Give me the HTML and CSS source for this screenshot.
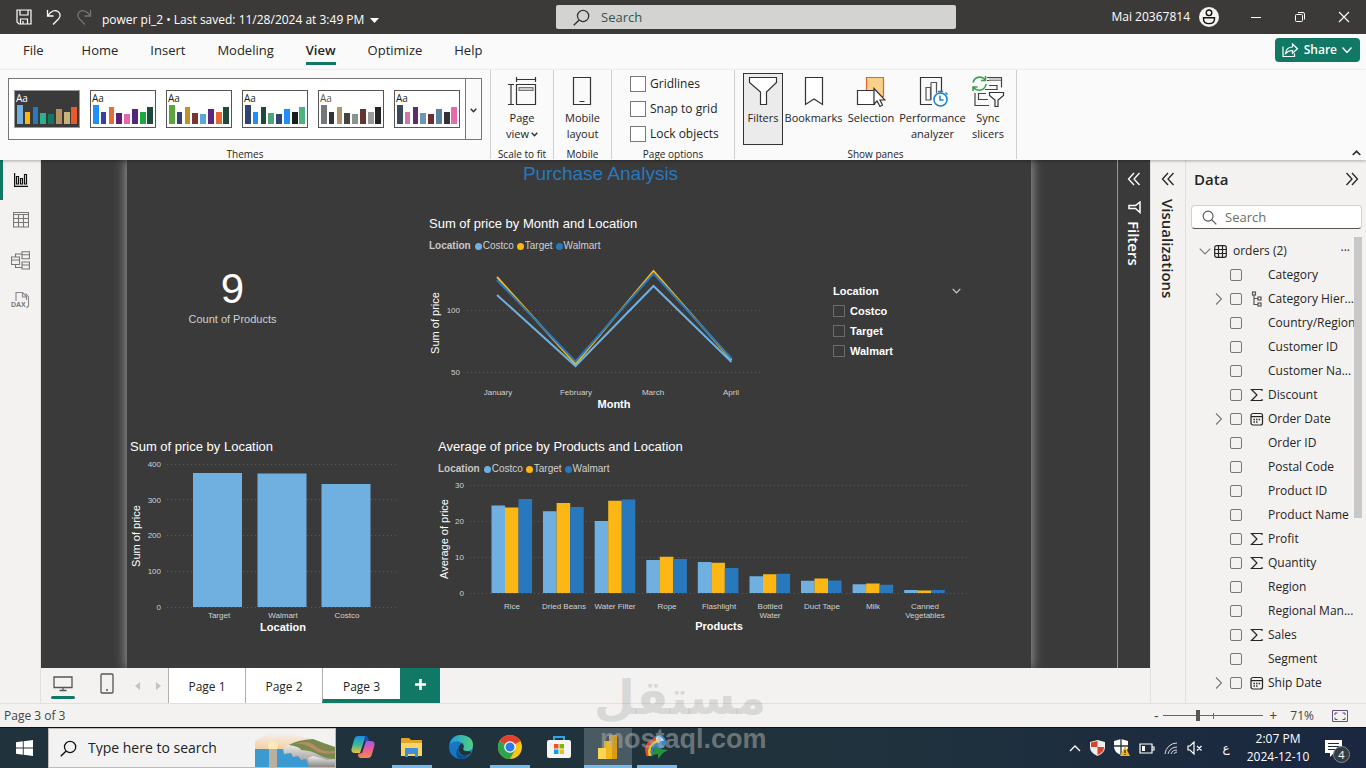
FILE: index.html
```html
<!DOCTYPE html>
<html lang="en">
<head>
<meta charset="utf-8">
<title>power pi_2</title>
<link rel="stylesheet" href="styles.css">
</head>
<body>
<svg class="defs" aria-hidden="true">
  <symbol id="i-sigma" viewBox="0 0 14 14"><path d="M12 3V1.500H1.500L7 7 1.500 12.500H12V11" fill="none" stroke="#252423" stroke-width="1.200"/></symbol>
  <symbol id="i-cal" viewBox="0 0 14 14"><rect x="1" y="1.500" width="11.500" height="11.500" rx="2" fill="none" stroke="#252423" stroke-width="1.200"/><path d="M1 4.600h11.500" stroke="#252423" stroke-width="1.200"/><path d="M3.500 7.500h7M3.500 10h5" stroke="#252423" stroke-width="1.400" stroke-dasharray="1.400 1.200"/></symbol>
  <symbol id="i-hier" viewBox="0 0 14 16"><g fill="none" stroke="#555" stroke-width="1.200"><rect x="2.500" y="1" width="3" height="3"/><rect x="8" y="6" width="3" height="3"/><rect x="8" y="12" width="3" height="3"/><path d="M4 4v9.500h4M4 7.500h4"/></g></symbol>
  <symbol id="i-right" viewBox="0 0 8 14"><path d="M1 1.500 6.500 7 1 12.500" fill="none" stroke="#777" stroke-width="1.100"/></symbol>
  <symbol id="i-dbl-left" viewBox="0 0 14 14"><path d="M7 1 1.500 7 7 13M12.500 1 7 7l5.500 6" fill="none" stroke="currentColor" stroke-width="1.300"/></symbol>
  <symbol id="i-search" viewBox="0 0 16 16"><circle cx="9.500" cy="6.500" r="5.300" fill="none" stroke="currentColor" stroke-width="1.200"/><path d="M5.800 10.300.7 15.400" stroke="currentColor" stroke-width="1.300"/></symbol>
</svg>

<header class="titlebar">
  <div class="title-left">
    <button class="icon-btn" aria-label="Save"><svg width="16" height="16" viewBox="0 0 16 16" fill="none" stroke="#fff" stroke-width="1.200"><path d="M1 1h14v14H3L1 13z"/><path d="M4 1v5h8V1M4.500 15v-5h7v5M7 12v3"/></svg></button>
    <button class="icon-btn" aria-label="Undo"><svg width="16" height="16" viewBox="0 0 16 16" fill="none" stroke="#fff" stroke-width="1.300"><path d="M1.500 1v6h6M1.800 6.700C5 2 9 .5 12 2.500c3 2.200 2.500 5.500.5 7.500L7 15.500"/></svg></button>
    <button class="icon-btn dim" aria-label="Redo"><svg width="16" height="16" viewBox="0 0 16 16" fill="none" stroke="#77756f" stroke-width="1.300"><path d="M14.500 1v6h-6M14.200 6.700C11 2 7 .5 4 2.500 1 4.700 1.500 8 3.500 10L9 15.500"/></svg></button>
    <button class="doc-title">power pi_2 • Last saved: 11/28/2024 at 3:49 PM<svg width="9" height="5" viewBox="0 0 9 5"><path d="M0 0h9L4.500 5z" fill="#fff"/></svg></button>
  </div>
  <label class="title-search"><svg width="17" height="17"><use href="#i-search"/></svg><input type="text" placeholder="Search" aria-label="Search"></label>
  <div class="title-right">
    <span>Mai 20367814</span>
    <svg class="avatar" width="20" height="20" viewBox="0 0 20 20"><circle cx="10" cy="10" r="10" fill="#f3f2f1"/><circle cx="10" cy="5.800" r="2.800" fill="none" stroke="#111" stroke-width="1.400"/><path d="M4.500 10.700h11v1.300c0 3-2.500 4.600-5.500 4.600S4.500 15 4.500 12z" fill="none" stroke="#111" stroke-width="1.400"/></svg>
    <button class="win-btn" aria-label="Minimize"><svg width="12" height="12"><path d="M1 6.500h10" stroke="#fff"/></svg></button>
    <button class="win-btn" aria-label="Restore"><svg width="12" height="12" fill="none" stroke="#fff"><rect x="1.500" y="3.500" width="7" height="7" rx="1"/><path d="M4 1.500h5a1.500 1.500 0 0 1 1.500 1.500v5.500"/></svg></button>
    <button class="win-btn" aria-label="Close"><svg width="12" height="12"><path d="m1 1 10 10M11 1 1 11" stroke="#fff" stroke-width="1.100"/></svg></button>
  </div>
</header>

<nav class="tabs">
  <button>File</button><button>Home</button><button>Insert</button><button>Modeling</button><button class="on">View</button><button>Optimize</button><button>Help</button>
  <button class="share"><svg width="17" height="15" viewBox="0 0 17 15" fill="none" stroke="#fff" stroke-width="1.200"><path d="M1 3.500v10h11.500v-3"/><path d="M3.500 10.500C4 6.500 6.500 4 10.500 4V1L15.500 5.700l-5 4.500V7.500c-3 0-5 .8-7 3z"/></svg>Share<svg width="10" height="6" viewBox="0 0 10 6"><path d="m.5.5 4.500 5 4.500-5" fill="none" stroke="#fff" stroke-width="1.300"/></svg></button>
</nav>

<section class="ribbon">
  <div class="group themes">
    <div class="gallery">
      <div class="thumbs">
        <button class="thumb dark" aria-label="Theme 1"><span>Aa</span><svg width="62" height="19"><path fill="#70b0e0" d="M1 0h6v19H1z"/><path fill="#fcb714" d="M9 7h5v12H9z"/><path fill="#2878bd" d="M17 2h5v17h-5z"/><path fill="#2fb08c" d="M24 8h6v11h-6z"/><path fill="#117865" d="M32 9h6v10h-6z"/><path fill="#b59262" d="M40 4h6v15h-6z"/><path fill="#c7b27c" d="M48 7h6v12h-6z"/><path fill="#ec5a29" d="M55 2h6v17h-6z"/></svg></button>
        <button class="thumb" aria-label="Theme 2"><span>Aa</span><svg width="62" height="19"><path fill="#1e8fff" d="M1 0h6v19H1z"/><path fill="#3a3fa6" d="M9 7h5v12H9z"/><path fill="#e66c37" d="M17 2h5v17h-5z"/><path fill="#5f1b78" d="M24 8h6v11h-6z"/><path fill="#e567ae" d="M32 9h6v10h-6z"/><path fill="#52257f" d="M40 4h6v15h-6z"/><path fill="#1aab40" d="M48 7h6v12h-6z"/><path fill="#1c4b3b" d="M55 2h6v17h-6z"/></svg></button>
        <button class="thumb" aria-label="Theme 3"><span>Aa</span><svg width="62" height="19"><path fill="#5aa63c" d="M1 0h6v19H1z"/><path fill="#33436f" d="M9 7h5v12H9z"/><path fill="#c0902d" d="M17 2h5v17h-5z"/><path fill="#7c3535" d="M24 8h6v11h-6z"/><path fill="#5ba6db" d="M32 9h6v10h-6z"/><path fill="#5f257e" d="M40 4h6v15h-6z"/><path fill="#ec6430" d="M48 7h6v12h-6z"/><path fill="#1c4b3b" d="M55 2h6v17h-6z"/></svg></button>
        <button class="thumb" aria-label="Theme 4"><span>Aa</span><svg width="62" height="19"><path fill="#31446f" d="M1 0h6v19H1z"/><path fill="#1e8fff" d="M9 7h5v12H9z"/><path fill="#20483f" d="M17 2h5v17h-5z"/><path fill="#4aa878" d="M24 8h6v11h-6z"/><path fill="#31446f" d="M32 9h6v10h-6z"/><path fill="#1e8fff" d="M40 4h6v15h-6z"/><path fill="#151f20" d="M48 7h6v12h-6z"/><path fill="#4db380" d="M55 2h6v17h-6z"/></svg></button>
        <button class="thumb grey" aria-label="Theme 5"><span>Aa</span><svg width="62" height="19"><path fill="#74787a" d="M1 0h6v19H1z"/><path fill="#333" d="M9 7h5v12H9z"/><path fill="#b39367" d="M17 2h5v17h-5z"/><path fill="#444" d="M24 8h6v11h-6z"/><path fill="#8a9491" d="M32 9h6v10h-6z"/><path fill="#633" d="M40 4h6v15h-6z"/><path fill="#999" d="M48 7h6v12h-6z"/><path fill="#222" d="M55 2h6v17h-6z"/></svg></button>
        <button class="thumb" aria-label="Theme 6"><span>Aa</span><svg width="62" height="19"><path fill="#3b4a5a" d="M1 0h6v19H1z"/><path fill="#d277a9" d="M9 7h5v12H9z"/><path fill="#5a2d73" d="M17 2h5v17h-5z"/><path fill="#6c97bb" d="M24 8h6v11h-6z"/><path fill="#6f2b32" d="M32 9h6v10h-6z"/><path fill="#5a82a1" d="M40 4h6v15h-6z"/><path fill="#33303b" d="M48 7h6v12h-6z"/><path fill="#e56bad" d="M55 2h6v17h-6z"/></svg></button>
      </div>
      <button class="gallery-more" aria-label="More themes"><svg width="7" height="5"><path d="m.7.8 2.800 2.900L6.300.8" fill="none" stroke="#333" stroke-width="1.500"/></svg></button>
    </div>
    <p class="group-name">Themes</p>
  </div>

  <div class="group scale">
    <button class="tool"><svg width="30" height="32" viewBox="0 0 30 32" fill="none" stroke="#333" stroke-width="1.200"><path d="M9.500 1v5M28.500 1v5M9.500 3.500h19M1 8.500h6M1 28.500h6M4 8.500v20"/><path d="M9.500 8.500h19v20h-19z"/><path d="M12 11.500h14v3H12z" fill="#ccc" stroke="#777"/></svg>Page<br>view<svg class="mini" width="7" height="5"><path d="m.7.8 2.800 2.900L6.300.8" fill="none" stroke="#333" stroke-width="1.500"/></svg></button>
    <p class="group-name">Scale to fit</p>
  </div>

  <div class="group mobile">
    <button class="tool"><svg width="20" height="32" viewBox="0 0 20 32" fill="none" stroke="#333" stroke-width="1.200"><path d="M1.500 1.500h17v27h-17zM7.500 25.500h5"/></svg>Mobile<br>layout</button>
    <p class="group-name">Mobile</p>
  </div>

  <div class="group options">
    <div class="checks">
      <label><input type="checkbox">Gridlines</label>
      <label><input type="checkbox">Snap to grid</label>
      <label><input type="checkbox">Lock objects</label>
    </div>
    <p class="group-name">Page options</p>
  </div>

  <div class="group panes">
    <div class="tools">
      <button class="tool pressed"><svg width="30" height="32" viewBox="0 0 30 32"><path d="M1.500 1.500h27v5l-10 9.500v12.500h-6V16L1.500 6.500z" fill="#fff" stroke="#333" stroke-width="1.200"/></svg>Filters</button>
      <button class="tool bookmarks"><svg width="20" height="32" viewBox="0 0 20 32"><path d="M1.500 1.500h17v27L10 23l-8.500 5.500z" fill="#fff" stroke="#333" stroke-width="1.200"/></svg>Bookmarks</button>
      <button class="tool selection"><svg width="30" height="32" viewBox="0 0 30 32"><path d="M10.500 1.500h17v19h-17z" fill="#f7d08a" stroke="#e8632c" stroke-width="1.200"/><path d="M1.500 14.500h17v14h-17z" fill="#fff" stroke="#333" stroke-width="1.200"/><path d="m18 12.500 11 11.500h-5l2.500 5-2.500 1.500-3-5.500-3 3z" fill="#fff" stroke="#333" stroke-width="1.200"/></svg>Selection</button>
      <button class="tool perf"><svg width="30" height="32" viewBox="0 0 30 32" fill="none"><path d="M14 28.500H2.500v-27h21V16" stroke="#333" stroke-width="1.200"/><path d="M8 11.500h4.500V24H8zM13 6.500h5.500V17M13 6.500V24" stroke="#555" stroke-width="1.200"/><circle cx="22.500" cy="23.500" r="6.500" fill="#fff" stroke="#1683d0" stroke-width="1.500"/><path d="M22 19.500V24h3.500M20 15.500h5M22.500 15v2M27.500 16.500l2 2" stroke="#1683d0" stroke-width="1.500"/></svg>Performance<br>analyzer</button>
      <button class="tool sync"><svg width="34" height="32" viewBox="0 0 34 32" fill="none"><path d="M16 1.500h14.500v10M16 4.500h14M18 9.500h8v4H14M4 17v12.500h14M15 17.500H7.500v6H17" stroke="#444" stroke-width="1.200"/><path d="M18 2h12v2.500H18z" fill="#ccc"/><path d="M2 6.500A7 7 0 0 1 14 3.500M15 8a7 7 0 0 1-12.500 3.500M14.500 0v4.500H10M2 15v-4h4.500" stroke="#3ca04a" stroke-width="1.600"/><path d="M18.500 16.500h14v3L27 24v6.500h-3V24l-5.500-4.500z" fill="#fff" stroke="#333" stroke-width="1.200"/></svg>Sync<br>slicers</button>
    </div>
    <p class="group-name">Show panes</p>
  </div>
  <button class="collapse" aria-label="Collapse ribbon"><svg width="9" height="6"><path d="m.7 5 3.800-3.700L8.300 5" fill="none" stroke="#333" stroke-width="1.700"/></svg></button>
</section>

<main class="work">
  <nav class="rail">
    <button class="on" aria-label="Report view"><svg width="14" height="14" viewBox="0 0 14 14" fill="none" stroke="#111" stroke-width="1.200"><path d="M.6 0v13.400H14M2.500 3.500h2v7.500h-2zM6.500 5.500h2V11h-2zM10.500 1.500h2V11h-2z"/></svg></button>
    <button aria-label="Table view"><svg width="16" height="16" viewBox="0 0 16 16" fill="none" stroke="#777" stroke-width="1.100"><path d="M.5.5h15v14.500H.5zM.5 2.500h15M.5 6.500h15M.5 10.500h15M5.500 2.500V15M10.500 2.500V15"/></svg></button>
    <button aria-label="Model view"><svg width="19" height="19" viewBox="0 0 19 19" fill="none" stroke="#777" stroke-width="1.100"><path d="M.5 6h8v7.500h-8zM.5 9h8M11 .8h7.400v7H11zM11 3.800h7.400M11 11h7.400v7H11zM11 14h7.400M4.500 6V3H11M4.500 13.500v3H11"/></svg></button>
    <button aria-label="DAX query view"><svg width="20" height="18" viewBox="0 0 20 18" fill="none" stroke="#888" stroke-width="1.100"><path d="M5 10V1.500h6.500l4 4V9M11.500 1.500V6H16M14.500 2.500l3 3.500v9l-2 2"/><text x="0" y="16" class="dax">DAX</text></svg></button>
  </nav>

  <div class="center">
    <div class="stage">
      <div class="canvas">
        <article class="page">
          <h1>Purchase Analysis</h1>
          <div class="row top">
            <div class="card"><strong>9</strong><span>Count of Products</span></div>
            <figure class="visual">
              <h2>Sum of price by Month and Location</h2>
              <p class="legend"><b>Location</b><i class="costco"></i>Costco<i class="target"></i>Target<i class="walmart"></i>Walmart</p>
              <svg width="340" height="158" viewBox="429 255 340 158">
                <path class="grid" d="M467 310.500h294M467 372.500h294"/>
                <g class="tick end"><text x="460" y="313">100</text><text x="460" y="375">50</text></g>
                <path class="line s-target" d="M497 277 575.500 364 653.500 271 731.500 360"/>
                <path class="line s-walmart" d="M497 280 575.500 361.500 653.500 273.500 731.500 358.500"/>
                <path class="line s-costco" d="M497 295 575.500 366 653.500 286 731.500 362"/>
                <g class="tick"><text x="498" y="395">January</text><text x="576" y="395">February</text><text x="653" y="395">March</text><text x="731" y="395">April</text></g>
                <text class="axis" x="614" y="408">Month</text>
                <text class="axis thin" transform="translate(439 323) rotate(-90)">Sum of price</text>
              </svg>
            </figure>
            <fieldset class="slicer">
              <legend>Location<svg width="9" height="6"><path d="m.7.800 3.800 4L8.300.8" fill="none" stroke="#ccc" stroke-width="1.200"/></svg></legend>
              <label><input type="checkbox">Costco</label>
              <label><input type="checkbox">Target</label>
              <label><input type="checkbox">Walmart</label>
            </fieldset>
          </div>
          <div class="row bottom">
            <figure class="visual">
              <h2>Sum of price by Location</h2>
              <svg width="272" height="178" viewBox="130 457 272 178">
                <path class="grid" d="M167 464.500h232M167 499.500h232M167 535.500h232M167 571.500h232M167 607.500h232"/>
                <g class="tick end"><text x="161" y="467">400</text><text x="161" y="503">300</text><text x="161" y="538">200</text><text x="161" y="574">100</text><text x="161" y="610">0</text></g>
                <path class="s-costco" d="M193 473h49v134h-49zM257.500 473.500h49V607h-49zM321.500 484h49v123h-49z"/>
                <g class="tick"><text x="219" y="618">Target</text><text x="283" y="618">Walmart</text><text x="347" y="618">Costco</text></g>
                <text class="axis" x="283" y="631">Location</text>
                <text class="axis thin" transform="translate(140 536) rotate(-90)">Sum of price</text>
              </svg>
            </figure>
            <figure class="visual">
              <h2>Average of price by Products and Location</h2>
              <p class="legend"><b>Location</b><i class="costco"></i>Costco<i class="target"></i>Target<i class="walmart"></i>Walmart</p>
              <svg width="532" height="157" viewBox="438 478 532 157">
                <path class="grid" d="M470 485.500h497M470 521.500h497M470 557.500h497M470 593.500h497"/>
                <g class="tick end"><text x="464" y="488">30</text><text x="464" y="524">20</text><text x="464" y="560">10</text><text x="464" y="596">0</text></g>
                <path class="s-costco" d="M491.500 593v-87.500h13.600V593zM543 593v-81.700h13.600V593zM594.700 593v-72h13.600v72zM646.300 593v-33h13.600v33zM697.800 593v-31h13.600v31zM749.500 593v-16.700h13.600V593zM801 593v-12.200h13.600V593zM852.600 593v-8.800h13.600v8.800zM904.200 593v-3h13.600v3z"/>
                <path class="s-target" d="M505 593v-85.500h13.600V593zM556.600 593v-90h13.600v90zM608.200 593v-92.300h13.600V593zM659.800 593v-36.300h13.600V593zM711.300 593v-30.300h13.600V593zM763 593v-18.700h13.600V593zM814.500 593v-14.600h13.600V593zM866.100 593v-9.400h13.600v9.400zM917.700 593v-2.500h13.600v2.500z"/>
                <path class="s-walmart" d="M518.500 593v-94h13.600v94zM570.100 593v-86h13.600v86zM621.700 593v-93.500h13.600V593zM673.300 593v-34h13.600v34zM724.800 593v-25h13.600v25zM776.500 593v-19.300h13.600V593zM828 593v-12.500h13.600V593zM879.600 593v-8.300h13.600v8.300zM931.200 593v-3h13.600v3z"/>
                <g class="tick"><text x="512" y="609">Rice</text><text x="564" y="609">Dried Beans</text><text x="615" y="609">Water Filter</text><text x="667" y="609">Rope</text><text x="719" y="609">Flashlight</text><text x="770" y="609">Bottled</text><text x="770" y="618">Water</text><text x="822" y="609">Duct Tape</text><text x="873" y="609">Milk</text><text x="925" y="609">Canned</text><text x="925" y="618">Vegetables</text></g>
                <text class="axis" x="719" y="630">Products</text>
                <text class="axis thin" transform="translate(448 539) rotate(-90)">Average of price</text>
              </svg>
            </figure>
          </div>
        </article>
      </div>
      <aside class="side filters">
        <button aria-label="Expand filters"><svg width="14" height="14"><use href="#i-dbl-left"/></svg></button>
        <svg class="funnel" width="13" height="13" viewBox="0 0 13 13"><path d="M12 1v10.500L7.500 7.500H1v-3h6.500z" fill="none" stroke="#fff" stroke-width="1.500"/></svg>
        <h2>Filters</h2>
      </aside>
    </div>
    <footer class="pagebar">
      <button class="view-btn on" aria-label="Desktop layout"><svg width="20" height="16" viewBox="0 0 20 16" fill="none" stroke="#555" stroke-width="1.300"><path d="M1 1h18v10.500H1zM10 11.500v3M6.500 14.500h7"/></svg></button>
      <button class="view-btn" aria-label="Mobile layout"><svg width="14" height="21" viewBox="0 0 14 21" fill="none" stroke="#555" stroke-width="1.300"><rect x="1" y="1" width="12" height="19" rx="1"/><path d="M6 17h2"/></svg></button>
      <button class="arrow" aria-label="Previous page"><svg width="5" height="8"><path d="M5 0v8L0 4z" fill="#c4c3c1"/></svg></button>
      <button class="arrow" aria-label="Next page"><svg width="5" height="8"><path d="M0 0v8l5-4z" fill="#c4c3c1"/></svg></button>
      <button class="pg">Page 1</button><button class="pg">Page 2</button><button class="pg on">Page 3</button>
      <button class="add" aria-label="New page"><svg width="11" height="11"><path d="M5.500 0v11M0 5.500h11" stroke="#fff" stroke-width="2.600"/></svg></button>
    </footer>
  </div>

  <aside class="side viz">
    <button aria-label="Expand visualizations"><svg width="14" height="14"><use href="#i-dbl-left"/></svg></button>
    <h2>Visualizations</h2>
  </aside>

  <aside class="data">
    <header><h2>Data</h2><button aria-label="Collapse data"><svg class="flip" width="14" height="14"><use href="#i-dbl-left"/></svg></button></header>
    <label class="data-search"><svg class="flip" width="15" height="15"><use href="#i-search"/></svg><input type="text" placeholder="Search" aria-label="Search fields"></label>
    <div class="fields">
      <ul>
        <li class="table"><svg width="12" height="7"><path d="m.7.7 5.300 5.300L11.300.7" fill="none" stroke="#777" stroke-width="1.100"/></svg><svg width="13" height="13" viewBox="0 0 13 13" fill="none" stroke="#252423" stroke-width="1.200"><rect x=".7" y=".7" width="11.600" height="11.600" rx="2"/><path d="M4.500.7v11.600M8.500.7v11.600M.7 4.500h11.600M.7 8.500h11.600"/></svg><span>orders (2)</span><button aria-label="More options">···</button></li>
        <li><i></i><label><input type="checkbox"><i></i>Category</label></li>
        <li><i><svg width="8" height="14"><use href="#i-right"/></svg></i><label><input type="checkbox"><i><svg width="14" height="16"><use href="#i-hier"/></svg></i>Category Hier...</label></li>
        <li><i></i><label><input type="checkbox"><i></i>Country/Region</label></li>
        <li><i></i><label><input type="checkbox"><i></i>Customer ID</label></li>
        <li><i></i><label><input type="checkbox"><i></i>Customer Na...</label></li>
        <li><i></i><label><input type="checkbox"><i><svg width="14" height="14"><use href="#i-sigma"/></svg></i>Discount</label></li>
        <li><i><svg width="8" height="14"><use href="#i-right"/></svg></i><label><input type="checkbox"><i><svg width="14" height="14"><use href="#i-cal"/></svg></i>Order Date</label></li>
        <li><i></i><label><input type="checkbox"><i></i>Order ID</label></li>
        <li><i></i><label><input type="checkbox"><i></i>Postal Code</label></li>
        <li><i></i><label><input type="checkbox"><i></i>Product ID</label></li>
        <li><i></i><label><input type="checkbox"><i></i>Product Name</label></li>
        <li><i></i><label><input type="checkbox"><i><svg width="14" height="14"><use href="#i-sigma"/></svg></i>Profit</label></li>
        <li><i></i><label><input type="checkbox"><i><svg width="14" height="14"><use href="#i-sigma"/></svg></i>Quantity</label></li>
        <li><i></i><label><input type="checkbox"><i></i>Region</label></li>
        <li><i></i><label><input type="checkbox"><i></i>Regional Man...</label></li>
        <li><i></i><label><input type="checkbox"><i><svg width="14" height="14"><use href="#i-sigma"/></svg></i>Sales</label></li>
        <li><i></i><label><input type="checkbox"><i></i>Segment</label></li>
        <li><i><svg width="8" height="14"><use href="#i-right"/></svg></i><label><input type="checkbox"><i><svg width="14" height="14"><use href="#i-cal"/></svg></i>Ship Date</label></li>
      </ul>
      <div class="scroll"></div>
    </div>
  </aside>
</main>

<footer class="status">
  <span class="count">Page 3 of 3</span>
  <button aria-label="Zoom out">-</button>
  <input type="range" min="0" max="100" value="34" aria-label="Zoom">
  <button aria-label="Zoom in">+</button>
  <span class="pct">71%</span>
  <button aria-label="Fit to page"><svg width="16" height="12" viewBox="0 0 16 12" fill="none" stroke="#555"><path d="M.5.500h15v11H.5z" stroke="#6b4f7d"/><path d="M3 5V3h2.500M10.500 3H13v2M13 7.500v2h-2.500M5.500 9.500H3v-2"/></svg></button>
</footer>

<footer class="taskbar">
  <button class="task" aria-label="Start"><svg width="17" height="16" viewBox="0 0 17 16" fill="#fff"><path d="M0 2.300 6.800 1.300v6.300H0zM7.700 1.200 17 0v7.600H7.700zM0 8.400h6.800v6.400L0 13.800zM7.700 8.400H17V16l-9.300-1.200z"/></svg></button>
  <label class="task-search"><svg width="17" height="17"><use href="#i-search"/></svg><input type="text" placeholder="Type here to search" aria-label="Type here to search">
    <svg width="80" height="38" viewBox="0 0 80 38"><defs><linearGradient id="sky" x2="0" y2="1"><stop stop-color="#f2f2f2"/><stop offset="1" stop-color="#f6c98f"/></linearGradient><linearGradient id="rock" x2="0" y2="1"><stop stop-color="#eee"/><stop offset="1" stop-color="#8a8580"/></linearGradient></defs><path d="M0 12Q20-2 44 7q20 4 36 12v4H0z" fill="url(#sky)"/><circle cx="18" cy="17" r="5" fill="#ffe9b8"/><path d="M0 20h60v18H0z" fill="#3a9ad1"/><path d="M14 20h8v18h-8z" fill="#f2b98c" opacity=".7"/><path d="M28 19q6-4 14-4 20-1 38 5v18H54l-3-8-5 1-3-4-5 1-2-4-7 1z" fill="url(#rock)"/><path d="M34 16q8-5 24-6 10 4 22 8v12q-8 0-14-3-10-6-20-6 0-3-12-5z" fill="#7a8a4c"/><path d="M40 15q12-5 20 2t20 5v2q-14 2-22-4t-18-5z" fill="#b88c66"/><path d="m54 38-1-9 5-2 8 2 6 2 8-1v8z" fill="url(#rock)"/></svg></label>
  <button class="task app" aria-label="Copilot"><svg width="26" height="26" viewBox="0 0 26 26"><defs><linearGradient id="cpa" x2="0" y2="1"><stop stop-color="#1a8fe0"/><stop offset=".5" stop-color="#37b7a0"/><stop offset="1" stop-color="#f2c230"/></linearGradient><linearGradient id="cpb" x2="0" y2="1"><stop stop-color="#a259e8"/><stop offset=".5" stop-color="#ec5c99"/><stop offset="1" stop-color="#f6894a"/></linearGradient></defs><path d="M8 2h7q3 0 3 4l-4 1-4 12H5q-5 0-3-6L4 6q1-4 4-4z" fill="url(#cpa)"/><path d="M18 24h-7q-3 0-3-4l4-1 4-12h5q5 0 3 6l-2 7q-1 4-4 4z" fill="url(#cpb)"/><path d="M15 2q3 0 4 5h-5z" fill="#2846b4"/></svg></button>
  <button class="task app open" aria-label="File Explorer"><svg width="22" height="22" viewBox="0 0 22 22"><path d="M0 3q0-1 1-1h7l2 2h11v16H0z" fill="#e0a526"/><path d="M0 7h21v13H0z" fill="#fbd563"/><path d="M4 21v-8q0-1 1-1h11q1 0 1 1v8h-3v-3H7v3z" fill="#3f8fd6"/></svg></button>
  <button class="task app" aria-label="Edge"><svg width="26" height="26" viewBox="0 0 26 26"><defs><linearGradient id="eda"><stop stop-color="#1b9de2"/><stop offset="1" stop-color="#54d07a"/></linearGradient></defs><circle cx="13" cy="13" r="12" fill="#1677c4"/><path d="M1.500 10Q4 1 13 1q12 1 12 10 0 6-6 6-4 0-4-2 2-3-1-6-6-4-12.500 1z" fill="url(#eda)"/><path d="M10 14q-1 9 10 8-4 4-9 3-5-4-1-11z" fill="#0d4f93"/><path d="M14 9q3 3 1 6 1 3 7 2l1 2q-4 4-9 2-5-3-3-9z" fill="#20333d"/></svg></button>
  <button class="task app open" aria-label="Chrome"><svg width="26" height="26" viewBox="0 0 26 26"><circle cx="13" cy="13" r="12" fill="#fbc417"/><path d="M13 13 2.600 7A12 12 0 0 1 23.400 7z" fill="#e2402c"/><path d="M13 13 2.600 7A12 12 0 0 0 13 25l5-9z" fill="#2da44e"/><circle cx="13" cy="13" r="5.800" fill="#fff"/><circle cx="13" cy="13" r="4.500" fill="#3079e8"/></svg></button>
  <button class="task app" aria-label="Microsoft Store"><svg width="24" height="24" viewBox="0 0 24 24"><path d="M7 6V2h10v4" fill="none" stroke="#28a8ea" stroke-width="2"/><rect y="5" width="24" height="18" rx="2" fill="#f5f5f5"/><path d="M7 9h4.500v4.500H7z" fill="#f25022"/><path d="M12.500 9H17v4.500h-4.500z" fill="#7fba00"/><path d="M7 14.500h4.500V19H7z" fill="#00a4ef"/><path d="M12.500 14.500H17V19h-4.500z" fill="#ffb900"/></svg></button>
  <button class="task app open active" aria-label="Power BI"><svg width="20" height="26" viewBox="0 0 20 26"><path d="M11 1h8v24h-8z" fill="#d99b10"/><path d="M6 7h8v18H6z" fill="#f0b722"/><path d="M0 14h8v11H0z" fill="#f9d553"/></svg></button>
  <button class="task app open" aria-label="Download manager"><svg width="26" height="26" viewBox="0 0 26 26"><circle cx="15" cy="8" r="7" fill="#3b88c9"/><path d="M13 2q5 0 7 5-4-1-5 2l-5-1z" fill="#cfe6f5"/><path d="M4 22Q-1 10 12 5" fill="none" stroke="#e5482d" stroke-width="3"/><path d="M6 22Q3 12 13 7" fill="none" stroke="#f2cc2d" stroke-width="2.500"/><path d="M8 22Q6 14 14 9" fill="none" stroke="#3a86d9" stroke-width="2"/><path d="m11 12 5 3 8 1-5 3-5 6v-5l-6 1z" fill="#27933c"/></svg></button>
  <div class="tray">
    <button aria-label="Hidden icons"><svg width="12" height="7"><path d="m1 6 5-5 5 5" fill="none" stroke="#fff" stroke-width="1.300"/></svg></button>
    <svg width="15" height="16" viewBox="0 0 15 16"><path d="M7.500 0 15 2v5q0 6-7.500 9Q0 13 0 7V2z" fill="#eee"/><path d="M7.500 1 1 2.500V7h6.500zM7.500 7v8Q14 12.500 14 7z" fill="#d8432b"/></svg>
    <svg width="16" height="18" viewBox="0 0 16 18"><path d="M7 0 14 2v6q0 5-7 8Q0 13 0 8V2z" fill="#fff"/><path d="M7 0v16M0 7h14" stroke="#20333d" stroke-width="1.300"/><path d="m11 7 5 10H6z" fill="#f7b417"/><path d="M11 11v3M11 15v1" stroke="#222" stroke-width="1.200"/></svg>
    <svg width="16" height="11"><path d="M1 1h12v9H1zM13.500 4h1.500v3h-1.500" fill="none" stroke="#fff" stroke-width="1.200"/><path d="M3 3h3v5H3z" fill="#fff"/></svg>
    <svg width="14" height="14" fill="none" stroke="#ddd"><path d="M1 13A12 12 0 0 1 13 2M4 13a9 9 0 0 1 9-7M7 13a6 6 0 0 1 6-4M10 13a3 3 0 0 1 3-2"/></svg>
    <svg width="16" height="14" fill="none" stroke="#fff" stroke-width="1.200"><path d="M1 5h2l4-4v12L3 9H1zM10 5l4.500 4.500M14.500 5 10 9.500"/></svg>
    <span class="lang" lang="ar">ع</span>
    <p class="clock">2:07 PM<br>2024-12-10</p>
    <button class="notes" aria-label="Notifications"><svg width="17" height="17"><path d="M0 0h17v13H9l-4 4v-4H0z" fill="#fff"/><path d="M3 3.500h11M3 6.500h11M3 9.500h8" stroke="#1c2a40"/></svg><span class="badge">4</span></button>
  </div>
</footer>

<div class="watermark"><span lang="ar" dir="rtl">مستقل</span><span>mostaql.com</span></div>
</body>
</html>
```
FILE: styles.css
```css
* { box-sizing: border-box; }
body {
  margin: 0;
  min-height: 100vh;
  display: flex;
  flex-direction: column;
  position: relative;
  overflow: hidden;
  background: #f3f2f1;
  color: #252423;
  font: 12px/16px "Open Sans", "Noto Sans", sans-serif;
}
button { border: 0; padding: 0; background: none; color: inherit; font: inherit; }
input { font: inherit; color: inherit; margin: 0; }
input[type="text"] { border: 0; outline: 0; padding: 0; background: none; min-width: 0; flex: 1; }
h1, h2, p, ul, figure, fieldset { margin: 0; padding: 0; border: 0; font-weight: 400; list-style: none; }
svg { flex: none; }
.defs { display: none; }
.flip { transform: scaleX(-1); }

/* title bar */
.titlebar { height: 34px; flex: none; background: #3b3a39; color: #fff; display: grid; grid-template-columns: 54fr 400px 41fr; align-items: center; padding: 0 0 0 16px; }
.title-left, .title-right { display: flex; align-items: center; }
.icon-btn { width: 16px; height: 16px; margin-right: 14px; }
.icon-btn.dim { margin-right: 10px; }
.icon-btn svg { display: block; }
.doc-title { display: flex; align-items: center; gap: 6px; padding-top: 6px; white-space: nowrap; font-size: 12px; }
.title-search { height: 24px; display: flex; align-items: center; gap: 11px; padding-left: 17px; background: #d3d3d1; border-radius: 2px; color: #333; font-size: 13px; }
.title-search input::placeholder { color: #33564c; opacity: 1; }
.title-right { justify-content: flex-end; padding-right: 16px; }
.avatar { margin: 0 41px 0 9px; }
.win-btn { width: 12px; height: 12px; margin-left: 32px; }
.avatar + .win-btn { margin-left: -10px; }
.win-btn svg { display: block; }

/* ribbon tabs */
.tabs { height: 36px; flex: none; background: #fafafa; display: flex; align-items: center; padding: 0 6px 4px 7px; font-size: 13px; }
.tabs button { height: 32px; padding: 0 16px; position: relative; }
.tabs button:first-child { margin-right: 6px; }
.tabs .on { font-weight: 600; }
.tabs .on::after { content: ""; position: absolute; left: 16px; right: 16px; bottom: 1px; height: 3px; background: #117865; }
.tabs .share { margin-left: auto; height: 24px; padding: 0 8px 0 7px; display: flex; align-items: center; gap: 5px; background: #117865; color: #fff; border-radius: 4px; font-size: 12px; font-weight: 600; }

/* ribbon */
.ribbon { height: 90px; flex: none; background: #fafafa; display: flex; position: relative; z-index: 1; box-shadow: 0 1px 3px rgba(0, 0, 0, .3); }
.group { height: 89px; border-right: 1px solid #d2d0ce; display: flex; flex-direction: column; align-items: center; justify-content: space-between; }
.group-name { font-size: 10px; line-height: 10px; white-space: nowrap; }
.themes { padding: 8px 8px 0; }
.gallery { display: flex; height: 62px; background: #fff; border: 1px solid #777; }
.thumbs { display: flex; align-items: center; gap: 10px; padding: 0 5px; }
.thumb { width: 66px; height: 38px; border: 1px solid #555; background: #fff; display: flex; flex-direction: column; justify-content: space-between; align-items: flex-start; padding: 2px 1px 3px; font-size: 10px; line-height: 11px; color: #222; }
.thumb.dark { background: #3a3a3a; color: #fff; border-color: #999; }
.thumb.grey { color: #555; }
.gallery-more { width: 16px; border-left: 1px solid #777; background: #fafafa; }
.scale { width: 63px; }
.mobile { width: 58px; }
.options { width: 123px; }
.tool { display: block; padding-top: 6px; text-align: center; white-space: nowrap; font-size: 11px; line-height: 16px; }
.tool > svg:first-child { display: block; margin: 0 auto 2px; height: 32px; }
.mini { margin-left: 2px; vertical-align: 1px; }
.checks { display: flex; flex-direction: column; gap: 9px; padding-top: 6px; width: 100%; padding-left: 18px; }
.checks label { display: flex; gap: 4px; align-items: center; height: 16px; white-space: nowrap; }
.checks input { appearance: none; width: 16px; height: 16px; border: 1px solid #777; background: #fff; }
.panes { width: 282px; }
.tools { display: flex; align-items: flex-start; align-self: stretch; padding: 3px 0 0 8px; }
.tools .tool { padding-top: 3px; }
.tools .pressed { width: 40px; border: 1px solid #333; background: #ebebeb; padding: 2px 0 18px; }
.bookmarks { width: 61px; }
.selection { width: 54px; }
.perf { width: 69px; }
.sync { width: 42px; }
.collapse { margin: auto 5px 4px auto; line-height: 8px; }

/* work area */
.work { flex: 1; display: flex; min-height: 0; }
.rail { width: 41px; border-right: 1px solid #e1dfdd; }
.rail button { display: flex; align-items: center; justify-content: center; width: 40px; height: 40px; padding-right: 2px; border-left: 3px solid transparent; }
.rail .on { border-color: #117865; }
.dax { font: bold 7px "Liberation Sans", sans-serif; fill: #777; stroke: none; }
.center { flex: 1; min-width: 0; display: flex; flex-direction: column; }
.stage { flex: 1; display: flex; min-height: 0; background: #3a3a3a; }
.canvas { flex: 1; min-width: 0; overflow: hidden; display: flex; justify-content: center; }
.page { width: 904px; background: #3a3a3a; box-shadow: 0 0 11px 1px #a0a0a0; color: #fff; font-family: "Liberation Sans", Arial, sans-serif; }
.page h1 { color: #2878bd; font-size: 19px; line-height: 27px; text-align: center; padding-left: 43px; }
.row { display: grid; align-items: start; }
.top { grid-template-columns: 302px 404px 1fr; padding-top: 27px; }
.bottom { grid-template-columns: 308px 1fr; padding: 24px 0 0 3px; }
.visual h2 { font-size: 13px; line-height: 20px; }
.visual svg { display: block; overflow: visible; }
.legend { display: flex; align-items: center; height: 16px; margin: 4px 0 1px; font-size: 10px; color: #d0d0d0; }
.legend b { color: #c8c8c8; margin-right: 1px; }
.legend i { width: 7px; height: 7px; border-radius: 50%; margin: 0 1px 0 3px; }
.legend .costco { background: #70b0e0; }
.legend .target { background: #fcb714; }
.legend .walmart { background: #2878bd; }
.s-costco { fill: #70b0e0; }
.s-target { fill: #fcb714; }
.s-walmart { fill: #2878bd; }
.line { fill: none; stroke-width: 2; }
.line.s-costco { stroke: #70b0e0; }
.line.s-target { stroke: #fcb714; }
.line.s-walmart { stroke: #2878bd; }
.grid { stroke: #5c5c5c; stroke-dasharray: 1 3; fill: none; }
.tick { font-size: 8px; fill: #d0d0d0; text-anchor: middle; }
.tick.end { text-anchor: end; }
.axis { font-size: 11px; font-weight: 700; fill: #fff; text-anchor: middle; }
.axis.thin { font-weight: 400; }
.card { width: 211px; padding-top: 53px; text-align: center; }
.card strong { display: block; font-weight: 400; font-size: 42px; line-height: 44px; }
.card span { font-size: 11px; line-height: 14px; color: #d0d0d0; }
.slicer { width: 128px; padding-top: 67px; font-size: 11px; font-weight: 700; }
.slicer legend { display: flex; float: left; width: 100%; justify-content: space-between; align-items: center; padding: 0; height: 20px; }
.slicer label { clear: both; display: flex; align-items: center; gap: 5px; height: 20px; }
.slicer input { appearance: none; width: 12px; height: 12px; border: 1px solid #6b6b6b; }

/* collapsed side panes */
.side { display: flex; flex-direction: column; align-items: center; padding-top: 12px; }
.side button { height: 14px; }
.side button svg, .data header svg { display: block; }
.side h2 { writing-mode: vertical-rl; font-weight: 600; font-size: 15px; line-height: 16px; }
.filters { width: 33px; border-left: 1px solid #999; color: #fff; }
.funnel { margin: 15px 0 7px; }
.viz { width: 36px; border-left: 1px solid #e1dfdd; border-right: 1px solid #e1dfdd; }
.viz h2 { margin-top: 13px; }

/* page tabs */
.pagebar { height: 35px; flex: none; display: flex; align-items: stretch; padding-left: 10px; }
.view-btn { width: 24px; margin-right: 20px; display: flex; justify-content: center; align-items: center; padding-bottom: 4px; position: relative; }
.view-btn + .view-btn { margin-right: 16px; }
.view-btn.on::after { content: ""; position: absolute; left: 0; right: 0; bottom: 4px; height: 3px; background: #117865; border-radius: 2px; }
.arrow { width: 5px; margin-right: 16px; }
.arrow + .arrow { margin-right: 7px; }
.pg { width: 77px; background: #fff; border-left: 1px solid #b3b0ad; padding-top: 3px; }
.pg.on { border-bottom: 4px solid #117865; width: 78px; padding-top: 7px; }
.add { width: 40px; background: #117865; }

/* data pane */
.data { width: 180px; display: flex; flex-direction: column; padding-left: 5px; min-height: 0; }
.data header { height: 40px; display: flex; justify-content: space-between; align-items: center; padding: 0 7px 2px 3px; }
.data h2 { font-size: 15px; font-weight: 600; }
.data-search { display: flex; align-items: center; gap: 8px; height: 24px; margin: 5px 4px 8px 0; padding-left: 10px; background: #fff; border: 1px solid #d1d1d1; border-bottom-color: #555; border-radius: 4px; color: #555; font-size: 13px; }
.data-search input::placeholder { color: #6b6f60; opacity: 1; }
.fields { flex: 1; display: flex; justify-content: space-between; min-height: 0; overflow: hidden; }
.fields ul { flex: 1; min-width: 0; padding-top: 2px; }
.fields li { display: flex; align-items: center; height: 24px; padding-left: 24px; white-space: nowrap; }
.fields li.table { padding: 0 4px 0 8px; }
.table svg + svg { margin: 0 6px 0 3px; }
.table button { margin-left: auto; }
.fields label { display: flex; align-items: center; }
.fields li i { width: 15px; flex: none; display: flex; }
.fields label i { width: 18px; margin-left: 8px; }
.fields input { appearance: none; flex: none; width: 12px; height: 12px; border: 1px solid #777; border-radius: 2px; }
.scroll { width: 8px; height: 281px; background: #c8c8c8; margin-right: 4px; flex: none; }

/* status bar */
.status { height: 25px; flex: none; border-top: 1px solid #e1dfdd; border-bottom: 1px solid #111; display: flex; align-items: center; padding: 0 18px 0 4px; color: #444; }
.count { margin-right: auto; }
.status button { width: 8px; font-size: 14px; }
.status input { appearance: none; width: 100px; height: 12px; margin: 0 6px 0 3px; background: linear-gradient(#666, #666) 50px 50% / 1px 6px no-repeat, linear-gradient(#666, #666) 0 50% / 100% 1px no-repeat; }
.status input::-webkit-slider-thumb { appearance: none; width: 4px; height: 11px; background: #555; }
.pct { margin: 0 18px 0 13px; }
.status button:last-child { width: 16px; }
.status button svg { display: block; }

/* taskbar */
.taskbar { height: 40px; flex: none; display: flex; align-items: stretch; background: linear-gradient(90deg, #20333d, #20333d 60%, #1a2740); color: #fff; }
.task { width: 48px; display: flex; align-items: center; justify-content: center; }
.task-search { width: 288px; display: flex; align-items: center; gap: 11px; padding-left: 11px; background: #f2f2f2; border: 1px solid #bbb; color: #111; font-size: 14px; overflow: hidden; }
.task-search input::placeholder { color: #222; opacity: 1; }
.app { width: 40px; margin-right: 9px; border-bottom: 3px solid transparent; }
.task-search + .app { margin-left: 7px; }
.app.open { border-bottom-color: #76b9ed; }
.app.active { width: 48px; margin: 0 5px 0 -4px; background: #4a5a63; }
.tray { margin-left: auto; display: flex; align-items: center; gap: 9px; padding-right: 16px; }
.tray button { display: flex; }
.lang { width: 16px; margin-left: 6px; text-align: center; font-family: "DejaVu Sans", sans-serif; }
.clock { width: 66px; margin: 0 5px 0 2px; text-align: center; line-height: 18px; white-space: nowrap; }
.notes { position: relative; padding-right: 8px; }
.badge { position: absolute; right: 0; top: 6px; width: 17px; height: 17px; border-radius: 50%; background: #333d45; border: 1px solid #888; font-size: 11px; line-height: 15px; text-align: center; }

/* watermark */
.watermark { position: absolute; left: 600px; bottom: 15px; width: 166px; text-align: center; color: rgba(150, 150, 150, .3); font-family: "Liberation Sans", sans-serif; font-weight: 700; pointer-events: none; z-index: 2; }
.watermark span { display: block; font-size: 27px; line-height: 28px; }
.watermark span:first-child { font: bold 47px/54px "DejaVu Sans", sans-serif; white-space: nowrap; }
.watermark span:last-child { color: rgba(170, 170, 170, .55); }
```
